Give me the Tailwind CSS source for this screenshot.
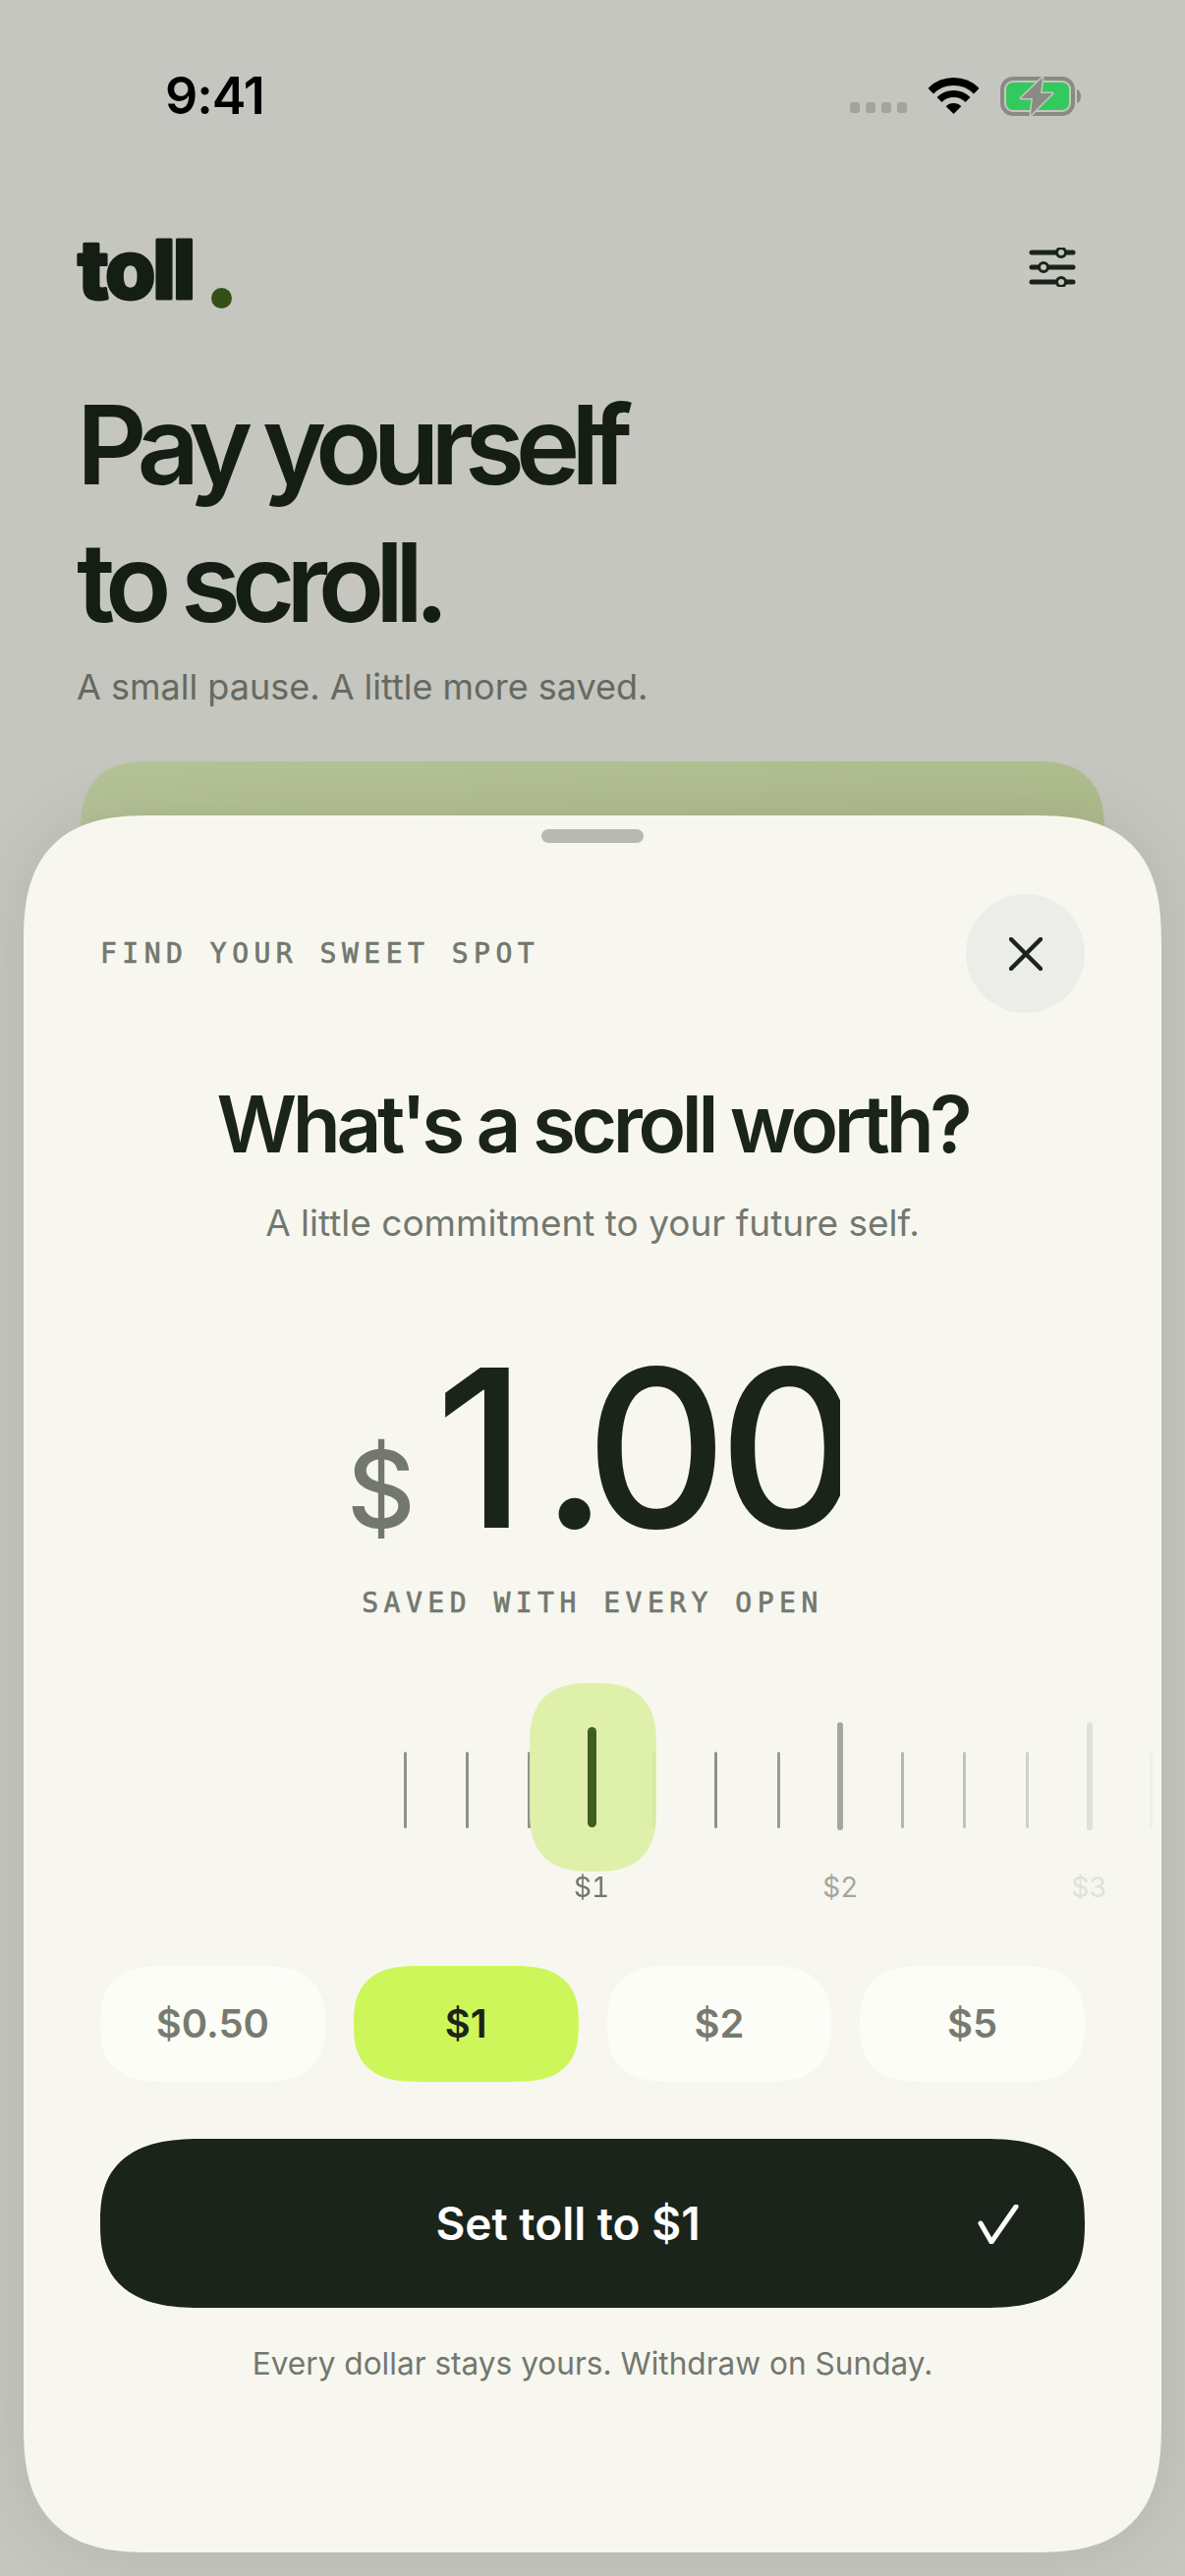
<!DOCTYPE html>
<html lang="en">
<head>
<meta charset="UTF-8">
<title>toll</title>
<script src="https://cdn.jsdelivr.net/npm/@tailwindcss/browser@4"></script>
</head>
<body class="bg-[#c5c6bf]">
<div class="relative w-[1206px] h-[2622px] overflow-hidden bg-[#c5c6bf] font-['Inter',sans-serif] text-[#1b241a]">

	<!-- status bar -->
	<div class="flex items-start justify-between pl-[168px] pr-[104px] pt-[68px] h-[200px]">
		<span class="text-[52px] leading-[60px] font-semibold text-black tracking-[-1px]">9:41</span>
		<div class="flex items-start pt-[10px]">
			<div class="flex gap-[6px] mt-[26px] mr-[22px]">
				<span class="w-[10px] h-[11px] rounded-[3px] bg-[#a3a49e]"></span>
				<span class="w-[10px] h-[11px] rounded-[3px] bg-[#a3a49e]"></span>
				<span class="w-[10px] h-[11px] rounded-[3px] bg-[#a3a49e]"></span>
				<span class="w-[10px] h-[11px] rounded-[3px] bg-[#a3a49e]"></span>
			</div>
			<svg class="w-[51px] h-[37px] mt-[1px] mr-[22px]" viewBox="0 0 51 37" fill="none">
				<path d="M2.2 13.7A33 33 0 0 1 48.8 13.7" stroke="#000" stroke-width="8"/>
				<path d="M11 22.5A20.5 20.5 0 0 1 40 22.5" stroke="#000" stroke-width="7"/>
				<path d="M25.5 37L17.7 29.2A11 11 0 0 1 33.3 29.2Z" fill="#000"/>
			</svg>
			<svg class="w-[84px] h-[40px]" viewBox="0 0 84 40" fill="none">
				<rect x="2" y="2" width="72" height="36" rx="11" stroke="#8a8b85" stroke-width="4"/>
				<rect x="6" y="6" width="64" height="28" rx="7" fill="#34c95f"/>
				<path d="M78 13C81 14 82 17 82 20C82 23 81 26 78 27Z" fill="#8a8b85"/>
				<path d="M43 1L21 22L33 22L31 39L53 17L41 17Z" fill="#8a8b85" stroke="#c5c6bf" stroke-width="3" paint-order="stroke" stroke-linejoin="round"/>
			</svg>
		</div>
	</div>

	<!-- page behind the sheet -->
	<div class="px-[78px] text-[#151e15]">
		<div class="flex items-start justify-between h-[110px]">
			<div class="flex items-end mt-[24px]">
				<svg class="w-[130px] h-[100px] overflow-visible" viewBox="0 0 130 100">
					<text x="1" y="80" font-family="Inter" font-size="83" font-weight="800" letter-spacing="-3" fill="#151e15" stroke="#151e15" stroke-width="3" stroke-linejoin="round">toll</text>
				</svg>
				<span class="w-[21px] h-[21px] rounded-full bg-[#345018] ml-[7px] mb-[10px]"></span>
			</div>
			<button class="w-[114px] h-[114px] mt-[15px] rounded-[40px] bg-[#c6c7c1] flex items-center justify-center">
				<svg class="w-[48px] h-[40px]" viewBox="0 0 48 40" fill="none" stroke="#1b241a" stroke-width="5" stroke-linecap="round">
					<path d="M3 5H45M3 20H45M3 35H45"/>
					<circle cx="33" cy="5" r="4.5" fill="#c6c7c1" stroke-width="3"/>
					<circle cx="15" cy="20" r="4.5" fill="#c6c7c1" stroke-width="3"/>
					<circle cx="33" cy="35" r="4.5" fill="#c6c7c1" stroke-width="3"/>
				</svg>
			</button>
		</div>
		<h1 class="mt-[73px] text-[111px] leading-[140px] font-semibold tracking-[-9.2px]">Pay yourself<br>to scroll.</h1>
		<p class="mt-[11px] text-[36px] leading-[50px] text-[#666a61]">A small pause. A little more saved.</p>
		<div class="mt-[51px] mx-[4px] h-[300px] rounded-[72px] [corner-shape:superellipse(1.4)] bg-linear-to-br from-[#b6c398] to-[#a9b683]"></div>
	</div>

	<!-- bottom sheet -->
	<div class="absolute left-[24px] right-[24px] top-[830px] bottom-[24px] rounded-[130px] [corner-shape:superellipse(1.4)] bg-[#f7f7f0] shadow-[0_0_70px_rgba(0,0,0,0.09)] px-[78px]">
		<div class="w-[104px] h-[14px] rounded-full bg-[#b9b9b3] mx-auto mt-[14px]"></div>
		<div class="flex items-center justify-between mt-[52px]">
			<span class="font-['DejaVu_Sans_Mono',monospace] text-[28px] tracking-[5.5px] text-[#73786e] [-webkit-text-stroke:0.7px_#73786e]">FIND YOUR SWEET SPOT</span>
			<button class="w-[121px] h-[121px] rounded-full bg-[#ecede8] flex items-center justify-center">
				<svg class="w-[34px] h-[34px]" viewBox="0 0 34 34" fill="none" stroke="#1b241a" stroke-width="4.5" stroke-linecap="round"><path d="M2 2L32 32M32 2L2 32"/></svg>
			</button>
		</div>
		<h2 class="mt-[63px] text-center text-[80px] leading-[100px] font-semibold tracking-[-4.35px]">What's a scroll worth?</h2>
		<p class="mt-[26px] text-center text-[37px] leading-[50px] text-[#73786e]">A little commitment to your future self.</p>

		<!-- amount: the last digit is cut off in the app too -->
		<div class="flex items-baseline mt-[74px] h-[260px] w-[502px] ml-[251px] overflow-hidden whitespace-nowrap">
			<span class="text-[108px] leading-[260px] font-medium text-[#73786e] mr-[20px]">$</span>
			<span class="text-[224px] leading-[260px] font-medium tracking-[-9px]"><span class="mr-[24px]">1</span><span class="-mr-[14px]">.</span>00</span>
		</div>
		<p class="mt-[11px] text-center font-['DejaVu_Sans_Mono',monospace] text-[28px] leading-[34px] tracking-[5.5px] text-[#73786e] [-webkit-text-stroke:0.7px_#73786e]">SAVED WITH EVERY OPEN</p>

		<!-- ruler -->
		<div class="relative flex h-[188px] mt-[104px] -mx-[78px] pl-[356.65px] tabular-nums">
			<div class="absolute z-10 left-[515px] top-[-40px] w-[129px] h-[192px] rounded-[64px] [corner-shape:superellipse(1.4)] bg-[#dbee9f]/85 backdrop-blur-md"></div>

			<div class="w-[63.3px] shrink-0 flex flex-col items-center"><div class="h-[110px] flex items-end pb-[2px]"><span class="w-[3px] h-[78px] rounded-full bg-[#8f928b]"></span></div></div>
			<div class="w-[63.3px] shrink-0 flex flex-col items-center"><div class="h-[110px] flex items-end pb-[2px]"><span class="w-[3px] h-[78px] rounded-full bg-[#8f928b]"></span></div></div>
			<div class="w-[63.3px] shrink-0 flex flex-col items-center"><div class="h-[110px] flex items-end pb-[2px]"><span class="w-[3px] h-[78px] rounded-full bg-[#8f928b]"></span></div></div>
			<div class="w-[63.3px] shrink-0 flex flex-col items-center relative z-20"><div class="h-[110px] flex items-end pb-[3px]"><span class="w-[9px] h-[102px] rounded-full bg-[#3f5f1e]"></span></div><span class="mt-[38px] text-[28px] leading-[40px] text-[#73786e]">$1</span></div>
			<div class="w-[63.3px] shrink-0 flex flex-col items-center"><div class="h-[110px] flex items-end pb-[2px]"><span class="w-[3px] h-[78px] rounded-full bg-[#8f928b]"></span></div></div>
			<div class="w-[63.3px] shrink-0 flex flex-col items-center"><div class="h-[110px] flex items-end pb-[2px]"><span class="w-[3px] h-[78px] rounded-full bg-[#8f928b]"></span></div></div>
			<div class="w-[63.3px] shrink-0 flex flex-col items-center"><div class="h-[110px] flex items-end pb-[2px]"><span class="w-[3px] h-[78px] rounded-full bg-[#999c95]"></span></div></div>
			<div class="w-[63.3px] shrink-0 flex flex-col items-center"><div class="h-[110px] flex items-end"><span class="w-[6px] h-[110px] rounded-full bg-[#a4a69f]"></span></div><span class="mt-[38px] text-[28px] leading-[40px] text-[#a4a69f]">$2</span></div>
			<div class="w-[63.3px] shrink-0 flex flex-col items-center"><div class="h-[110px] flex items-end pb-[2px]"><span class="w-[3px] h-[78px] rounded-full bg-[#b5b7b0]"></span></div></div>
			<div class="w-[63.3px] shrink-0 flex flex-col items-center"><div class="h-[110px] flex items-end pb-[2px]"><span class="w-[3px] h-[78px] rounded-full bg-[#c0c2bb]"></span></div></div>
			<div class="w-[63.3px] shrink-0 flex flex-col items-center"><div class="h-[110px] flex items-end pb-[2px]"><span class="w-[3px] h-[78px] rounded-full bg-[#d0d1cb]"></span></div></div>
			<div class="w-[63.3px] shrink-0 flex flex-col items-center"><div class="h-[110px] flex items-end"><span class="w-[6px] h-[110px] rounded-full bg-[#e0e1dc]"></span></div><span class="mt-[38px] text-[28px] leading-[40px] text-[#e0e1dc]">$3</span></div>
			<div class="w-[63.3px] shrink-0 flex flex-col items-center"><div class="h-[110px] flex items-end pb-[2px]"><span class="w-[3px] h-[78px] rounded-full bg-[#eeeeea]"></span></div></div>
		</div>

		<!-- presets -->
		<div class="grid grid-cols-4 gap-[29px] mt-[60px]">
			<button class="h-[118px] rounded-[66px/59px] [corner-shape:superellipse(1.4)] bg-[#fdfdf8] text-[40px] font-semibold text-[#767b70]">$0.50</button>
			<button class="h-[118px] rounded-[66px/59px] [corner-shape:superellipse(1.4)] bg-[#cdf65a] text-[40px] font-semibold text-[#1b241a]">$1</button>
			<button class="h-[118px] rounded-[66px/59px] [corner-shape:superellipse(1.4)] bg-[#fdfdf8] text-[40px] font-semibold text-[#767b70]">$2</button>
			<button class="h-[118px] rounded-[66px/59px] [corner-shape:superellipse(1.4)] bg-[#fdfdf8] text-[40px] font-semibold text-[#767b70]">$5</button>
		</div>
		<button class="relative mt-[58px] w-full h-[172px] rounded-[106px/86px] [corner-shape:superellipse(1.4)] bg-[#1b241a] text-white text-[46px] font-semibold flex items-center justify-center pr-[50px]">
			Set toll to $1
			<svg class="absolute right-[67px] top-[67px] w-[42px] h-[40px]" viewBox="0 0 42 40" fill="none" stroke="#fff" stroke-width="5" stroke-linecap="round" stroke-linejoin="round"><path d="M3 19L14 38L39 2"/></svg>
		</button>
		<p class="mt-[35px] text-center text-[31.6px] leading-[44px] text-[#73786e]">Every dollar stays yours. Withdraw on Sunday.</p>
	</div>
</div>
</body>
</html>
